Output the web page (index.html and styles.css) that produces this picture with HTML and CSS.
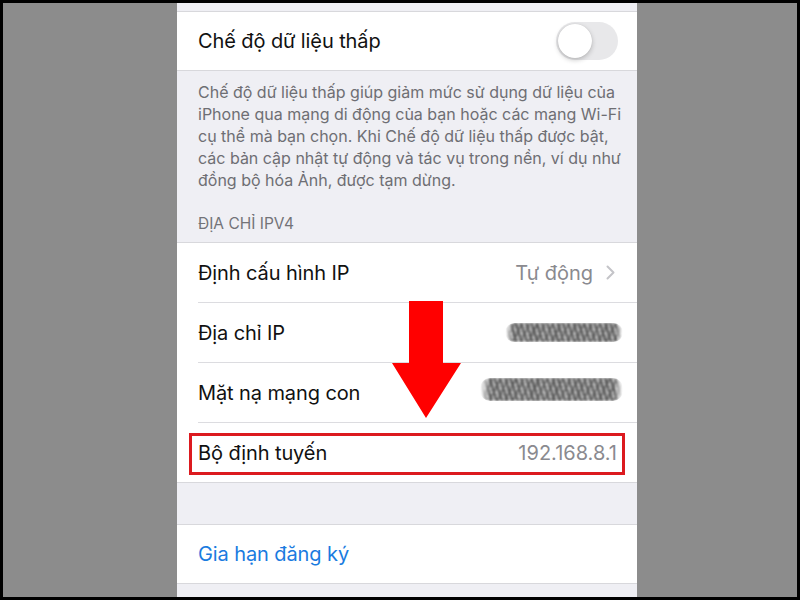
FILE: index.html
```html
<!DOCTYPE html>
<html lang="vi">
<head>
<meta charset="utf-8">
<link rel="stylesheet" href="styles.css">
</head>
<body>
<div class="frame">
  <div class="phone">
    <div class="gap-top"></div>
    <div class="group">
      <div class="row last">
        <span class="label">Chế độ dữ liệu thấp</span>
        <span class="toggle"><span class="knob"></span></span>
      </div>
    </div>
    <p class="footer">Chế độ dữ liệu thấp giúp giảm mức sử dụng dữ liệu của<br>iPhone qua mạng di động của bạn hoặc các mạng Wi-Fi<br>cụ thể mà bạn chọn. Khi Chế độ dữ liệu thấp được bật,<br>các bản cập nhật tự động và tác vụ trong nền, ví dụ như<br>đồng bộ hóa Ảnh, được tạm dừng.</p>
    <div class="header">ĐỊA CHỈ IPV4</div>
    <div class="group ipv4">
      <div class="row">
        <span class="label">Định cấu hình IP</span>
        <span class="value">Tự động
          <svg class="chev" width="9" height="15" viewBox="0 0 9 15"><polyline points="1.5,1.5 7.5,7.5 1.5,13.5" fill="none" stroke="#c4c4c8" stroke-width="2" stroke-linecap="round" stroke-linejoin="round"/></svg>
        </span>
      </div>
      <div class="row">
        <span class="label">Địa chỉ IP</span>
        <span class="blob short"></span>
      </div>
      <div class="row">
        <span class="label">Mặt nạ mạng con</span>
        <span class="blob long"></span>
      </div>
      <div class="row last router">
        <span class="label">Bộ định tuyến</span>
        <span class="value plain">192.168.8.1</span>
        <span class="highlight"></span>
      </div>
      <svg class="arrow" width="70" height="118" viewBox="0 0 70 118"><polygon points="17,0 51,0 51,62 69,62 34,117 0,62 17,62" fill="#ff0000"/></svg>
    </div>
    <div class="gap-mid"></div>
    <div class="group">
      <div class="row last">
        <span class="label link">Gia hạn đăng ký</span>
      </div>
    </div>
  </div>
</div>
</body>
</html>
```

FILE: styles.css
```css
html, body {
  margin: 0;
  padding: 0;
  background: #000;
}
body {
  width: 800px;
  height: 600px;
  overflow: hidden;
  font-family: "Inter", "Noto Sans", sans-serif;
}
.frame {
  margin: 3px;
  width: 794px;
  height: 594px;
  background: #8c8c8c;
  display: flex;
  overflow: hidden;
}
.phone {
  margin-left: 174px;
  width: 460px;
  background: #efeff4;
  display: flex;
  flex-direction: column;
}
.gap-top {
  height: 8px;
  flex: none;
}
.group {
  background: #fff;
  border-top: 1px solid #d8d8dc;
  border-bottom: 1px solid #d8d8dc;
  flex: none;
}
.row {
  height: 59px;
  margin-left: 21px;
  padding-right: 20px;
  border-bottom: 1px solid #dcdce0;
  display: flex;
  align-items: center;
  justify-content: space-between;
}
.row.last {
  border-bottom: none;
}
.group > .row:first-child.last {
  height: 58px;
}
.label {
  font-size: 20px;
  color: #111;
  letter-spacing: -0.1px;
}
.link {
  color: #1a7be0;
}
.toggle {
  width: 62px;
  height: 38px;
  border-radius: 19px;
  background: #e8e8ea;
  position: relative;
  margin-right: -1px;
}
.knob {
  position: absolute;
  left: 2px;
  top: 2px;
  width: 34px;
  height: 34px;
  border-radius: 50%;
  background: #fff;
  box-shadow: 0 2px 5px rgba(0,0,0,0.22), 0 0 1px rgba(0,0,0,0.15);
}
.footer {
  margin: 0;
  padding: 10px 10px 0 21px;
  font-size: 16px;
  line-height: 22px;
  color: #6e6e73;
  height: 110px;
  flex: none;
}
.header {
  height: 51px;
  box-sizing: border-box;
  padding: 0 0 9px 21px;
  display: flex;
  align-items: flex-end;
  font-size: 15.5px;
  line-height: 18px;
  color: #737378;
  flex: none;
}
.value {
  font-size: 20px;
  color: #8a8a8f;
  display: flex;
  align-items: center;
  gap: 13px;
}
.chev {
  margin-right: 2px;
}
.blob {
  display: block;
  margin-right: -6px;
  border-radius: 10px;
  background:
    repeating-linear-gradient(72deg, rgba(70,70,70,0.85) 0 2px, transparent 2px 5px),
    repeating-linear-gradient(-64deg, rgba(95,95,95,0.75) 0 2px, transparent 2px 7px),
    repeating-linear-gradient(0deg, rgba(255,255,255,0.55) 0 1px, transparent 1px 4px),
    #a4a4a4;
  filter: blur(1.3px);
  -webkit-mask-image: linear-gradient(to right, transparent 0, #000 7%, #000 94%, transparent 100%);
  mask-image: linear-gradient(to right, transparent 0, #000 7%, #000 94%, transparent 100%);
}
.blob.short {
  width: 118px;
  height: 19px;
}
.blob.long {
  width: 143px;
  height: 23px;
  margin-top: -6px;
}
.ipv4 {
  position: relative;
}
.router {
  position: relative;
}
.highlight {
  position: absolute;
  left: -9px;
  right: 12px;
  top: 10px;
  bottom: 7px;
  border: 3px solid #dc1a1f;
}
.arrow {
  position: absolute;
  left: 215px;
  top: 58px;
}
.gap-mid {
  height: 41px;
  flex: none;
}
```
